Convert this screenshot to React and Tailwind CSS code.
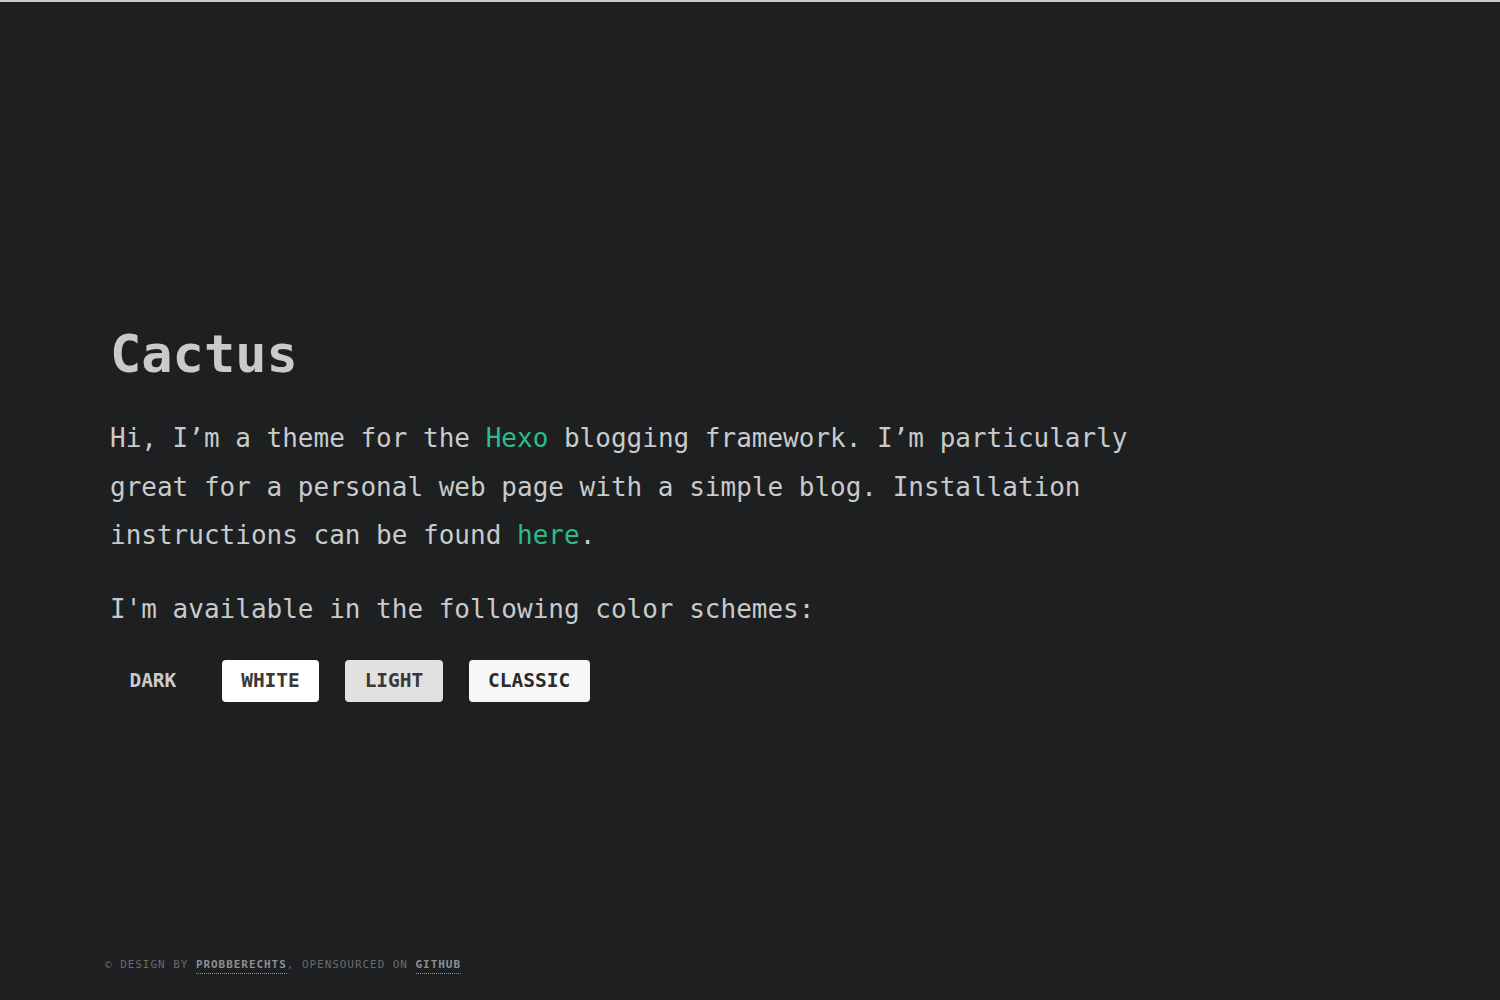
const mono = { fontFamily: '"DejaVu Sans Mono", "Liberation Mono", monospace' };

const schemes = [
  { name: 'DARK', cls: 'bg-transparent text-[#c9cacc]' },
  { name: 'WHITE', cls: 'bg-white text-[#383838]' },
  { name: 'LIGHT', cls: 'bg-[#e2e1df] text-[#383838]' },
  { name: 'CLASSIC', cls: 'bg-[#f7f7f7] text-[#2a2a2a]' },
];

export default function App() {
  return (
    <div className="min-h-screen h-[1000px] bg-[#1d1f21] border-t-2 border-[#c9cacc] flex flex-col" style={mono}>
      {/* Main content */}
      <div className="pl-[110px] pt-[321px] flex-1">
        <h1 className="text-[52px] leading-[62px] font-bold text-[#c9cacc]">Cactus</h1>
        <p className="mt-[29px] text-[26px] leading-[48.5px] text-[#c9cacc] max-w-[1030px]">
          Hi, I’m a theme for the <a className="text-[#2bbc8a]">Hexo</a> blogging framework. I’m particularly great
          for a personal web page with a simple blog. Installation instructions can be found{' '}
          <a className="text-[#2bbc8a]">here</a>.
        </p>
        <p className="mt-[25.5px] text-[26px] leading-[48.5px] text-[#c9cacc]">
          I'm available in the following color schemes:
        </p>
        <div className="mt-[26.5px] flex gap-[26px]">
          {schemes.map((s) => (
            <span
              key={s.name}
              className={`h-[42px] px-[19.4px] flex items-center rounded-[4px] text-[19.5px] font-bold ${s.cls}`}
            >
              {s.name}
            </span>
          ))}
        </div>
      </div>

      {/* Footer */}
      <footer className="pl-[105px] pb-[25px] text-[11px] leading-[20px] tracking-[0.95px] text-[#6a6b6d] uppercase">
        © Design by{' '}
        <a className="font-bold text-[#8e8f91] pb-[2px] border-b border-dotted border-[#8e8f91]">Probberechts</a>, Opensourced on{' '}
        <a className="font-bold text-[#8e8f91] pb-[2px] border-b border-dotted border-[#8e8f91]">GitHub</a>
      </footer>
    </div>
  );
}
